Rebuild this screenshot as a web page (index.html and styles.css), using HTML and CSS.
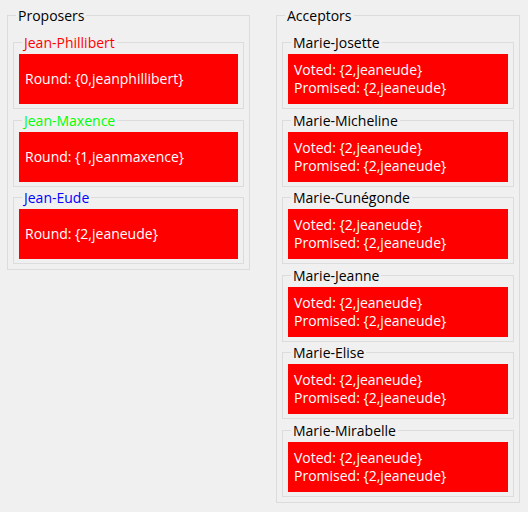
FILE: index.html
```html
<!DOCTYPE html>
<html>
<head>
<meta charset="utf-8">
<link rel="stylesheet" href="styles.css">
</head>
<body>
<div class="app">
  <fieldset class="group proposers">
    <legend>Proposers</legend>
    <div class="stack">
      <fieldset class="item"><legend class="c-red">Jean-Phillibert</legend><div class="cell">Round: {0,jeanphillibert}</div></fieldset>
      <fieldset class="item"><legend class="c-green">Jean-Maxence</legend><div class="cell">Round: {1,jeanmaxence}</div></fieldset>
      <fieldset class="item"><legend class="c-blue">Jean-Eude</legend><div class="cell">Round: {2,jeaneude}</div></fieldset>
    </div>
  </fieldset>
  <fieldset class="group acceptors">
    <legend>Acceptors</legend>
    <div class="stack">
      <fieldset class="item"><legend>Marie-Josette</legend><div class="cell"><span>Voted: {2,jeaneude}</span><span>Promised: {2,jeaneude}</span></div></fieldset>
      <fieldset class="item"><legend>Marie-Micheline</legend><div class="cell"><span>Voted: {2,jeaneude}</span><span>Promised: {2,jeaneude}</span></div></fieldset>
      <fieldset class="item"><legend>Marie-Cunégonde</legend><div class="cell"><span>Voted: {2,jeaneude}</span><span>Promised: {2,jeaneude}</span></div></fieldset>
      <fieldset class="item"><legend>Marie-Jeanne</legend><div class="cell"><span>Voted: {2,jeaneude}</span><span>Promised: {2,jeaneude}</span></div></fieldset>
      <fieldset class="item"><legend>Marie-Elise</legend><div class="cell"><span>Voted: {2,jeaneude}</span><span>Promised: {2,jeaneude}</span></div></fieldset>
      <fieldset class="item"><legend>Marie-Mirabelle</legend><div class="cell"><span>Voted: {2,jeaneude}</span><span>Promised: {2,jeaneude}</span></div></fieldset>
    </div>
  </fieldset>
</div>
</body>
</html>
```

FILE: styles.css
```css
* { box-sizing: border-box; }
body {
  margin: 0;
  background: #f0f0f0;
  font-family: "Open Sans", "Noto Sans", sans-serif;
  font-size: 14px;
  color: #000;
}
.app {
  display: flex;
  align-items: flex-start;
  gap: 26px;
  padding: 7px 0 0 7px;
}
fieldset {
  margin: 0;
  min-width: 0;
  border: 1px solid #dcdcdc;
}
legend {
  padding: 0 2px;
  margin-left: 3px;
  line-height: 17px;
}
.group { padding: 10px 5px 5px; }
.proposers { width: 243px; }
.acceptors { width: 244px; }
.stack {
  display: flex;
  flex-direction: column;
  gap: 2.5px;
}
.item { padding: 3px 5px 4px; }
.cell {
  height: 50px;
  background: #ff0000;
  color: #fff;
  display: flex;
  flex-direction: column;
  justify-content: center;
  padding-left: 6px;
  line-height: 18px;
}
.c-red { color: #ff0000; }
.c-green { color: #00ff00; }
.c-blue { color: #0000ff; }
```
